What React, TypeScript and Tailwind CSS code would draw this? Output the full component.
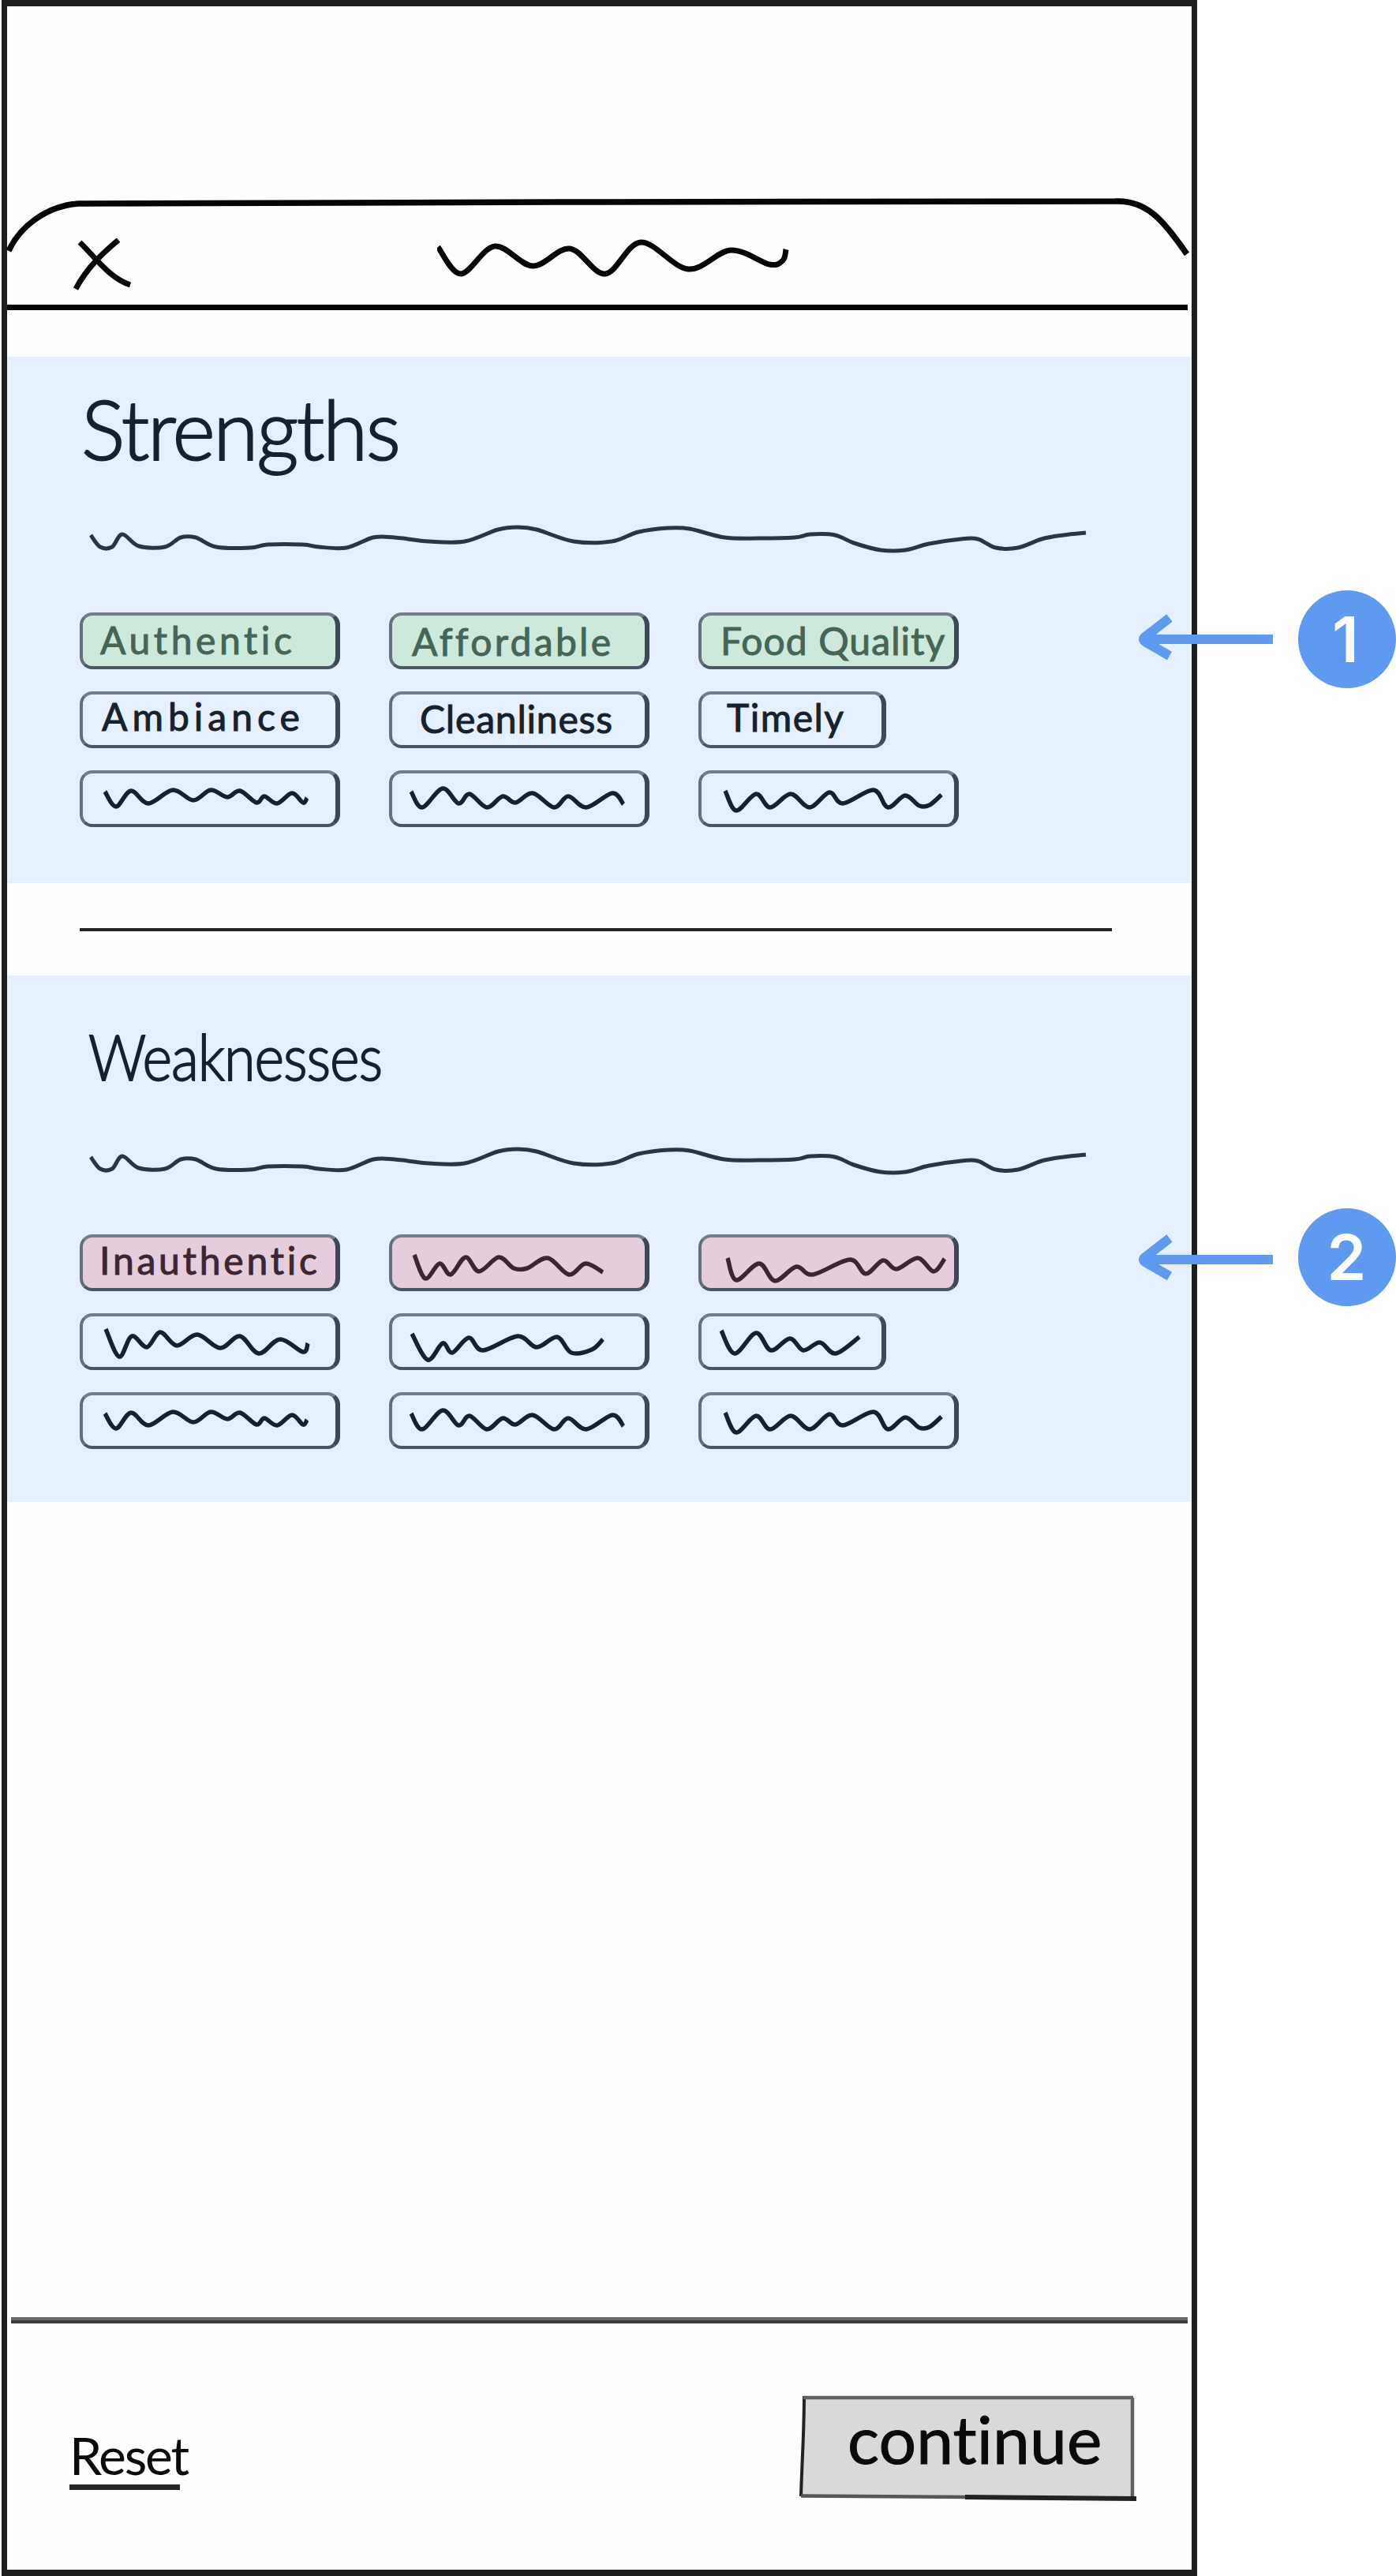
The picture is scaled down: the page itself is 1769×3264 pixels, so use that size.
type Point = [number, number];

/** Smooth curve that passes through every point. */
function curve(points: Point[]): string {
  let d = `M${points[0][0]} ${points[0][1]}`;
  for (let i = 0; i < points.length - 1; i++) {
    const p0 = points[Math.max(0, i - 1)];
    const p1 = points[i];
    const p2 = points[i + 1];
    const p3 = points[Math.min(points.length - 1, i + 2)];
    const c1x = p1[0] + (p2[0] - p0[0]) / 6;
    const c1y = p1[1] + (p2[1] - p0[1]) / 6;
    const c2x = p2[0] - (p3[0] - p1[0]) / 6;
    const c2y = p2[1] - (p3[1] - p1[1]) / 6;
    d += ` C${c1x} ${c1y} ${c2x} ${c2y} ${p2[0]} ${p2[1]}`;
  }
  return d;
}

const TITLE: Point[] = [
  [0, 7], [29, 41], [72, 6], [120, 31], [167, 9], [212, 41], [257, 1], [317, 35], [371, 11], [420, 29], [437, 24], [441, 10],
];

const SUMMARY: Point[] = [
  [14, 18], [26, 33], [41, 33], [54, 17], [75, 32], [108, 33], [128, 21], [147, 21], [173, 33], [216, 34], [238, 30],
  [283, 30], [303, 33], [338, 34], [372, 21], [399, 21], [443, 26], [488, 26], [530, 11], [555, 8], [579, 11], [626, 26],
  [674, 26], [708, 14], [746, 9], [773, 10], [817, 21], [861, 22], [906, 21], [926, 17], [957, 18], [981, 28], [1015, 37],
  [1046, 37], [1076, 29], [1117, 23], [1138, 23], [1161, 34], [1189, 34], [1219, 23], [1247, 18], [1275, 15],
];

const ROW3_A: Point[] = [
  [32, 27], [46, 46], [65, 26], [87, 42], [118, 25], [144, 38], [166, 25], [187, 34], [203, 26], [224, 41], [234, 33],
  [250, 42], [269, 29], [283, 41], [288, 35],
];
const ROW3_B: Point[] = [
  [28, 27], [42, 47], [68, 23], [88, 42], [102, 30], [124, 47], [144, 33], [160, 41], [182, 29], [209, 47], [227, 33],
  [250, 47], [283, 29], [297, 43],
];
const ROW3_C: Point[] = [
  [34, 26], [48, 51], [73, 30], [91, 47], [117, 30], [141, 47], [166, 28], [183, 42], [222, 25], [240, 47], [262, 32],
  [280, 45], [293, 44], [308, 31],
];
const PINK_B: Point[] = [
  [32, 26], [46, 56], [64, 37], [78, 51], [97, 29], [114, 47], [139, 29], [158, 43], [175, 43], [201, 30], [228, 51],
  [249, 37], [271, 48],
];
const PINK_C: Point[] = [
  [37, 30], [48, 58], [77, 37], [97, 59], [124, 41], [145, 51], [192, 32], [212, 50], [234, 33], [251, 44], [278, 30],
  [298, 47], [312, 31],
];
const ROW2_A: Point[] = [
  [33, 20], [50, 55], [66, 29], [85, 43], [102, 24], [123, 41], [149, 27], [178, 44], [203, 29], [227, 51], [254, 33],
  [283, 49], [289, 38],
];
const ROW2_B: Point[] = [
  [29, 26], [49, 59], [68, 38], [80, 50], [101, 31], [119, 47], [163, 29], [187, 43], [213, 30], [231, 50], [257, 46],
  [271, 33],
];
const ROW2_C: Point[] = [
  [29, 22], [46, 51], [73, 25], [92, 47], [116, 32], [133, 47], [154, 37], [174, 51], [204, 30],
];

type Tone = "plain" | "green" | "pink";

interface ChipData {
  label?: string;
  fit?: string;
  scribble?: Point[];
  tone?: Tone;
  short?: boolean;
}

const TONES: Record<Tone, string> = {
  plain: "text-[#17212e]",
  green: "bg-[#cde9dc] text-[#456556]",
  pink: "bg-[#e6cddb] text-[#3d2532]",
};

const STRENGTHS: ChipData[] = [
  { label: "Authentic", fit: "pl-[22px] pt-[7px] tracking-[4.6px]", tone: "green" },
  { label: "Affordable", fit: "pl-[25px] pt-[9px] tracking-[3.3px]", tone: "green" },
  { label: "Food Quality", fit: "pl-[24px] pt-[8px] tracking-[1.1px]", tone: "green" },
  { label: "Ambiance", fit: "pl-[24px] pt-[4px] tracking-[6px]" },
  { label: "Cleanliness", fit: "pl-[35px] pt-[7px] tracking-[0.8px]" },
  { label: "Timely", fit: "pl-[32px] pt-[5px] tracking-[1.5px]", short: true },
  { scribble: ROW3_A },
  { scribble: ROW3_B },
  { scribble: ROW3_C },
];

const WEAKNESSES: ChipData[] = [
  { label: "Inauthentic", fit: "pl-[21px] pt-[5px] tracking-[3.8px]", tone: "pink" },
  { scribble: PINK_B, tone: "pink" },
  { scribble: PINK_C, tone: "pink" },
  { scribble: ROW2_A },
  { scribble: ROW2_B },
  { scribble: ROW2_C, short: true },
  { scribble: ROW3_A },
  { scribble: ROW3_B },
  { scribble: ROW3_C },
];

function Chip({ label, fit = "", scribble, tone = "plain", short }: ChipData) {
  return (
    <button
      type="button"
      className={`flex h-[72px] items-start overflow-hidden rounded-[16px] border-[4.500px] border-r-[6px] border-t-[#747d8b] border-r-[#3c4757] border-b-[#4a5564] border-l-[#636d7b] ${
        short ? "w-[238px]" : "w-[330px]"
      } ${TONES[tone]}`}
    >
      {label && (
        <span className={`text-[48px] leading-none whitespace-nowrap [-webkit-text-stroke:1px_currentColor] ${fit}`}>
          {label}
        </span>
      )}
      {scribble && (
        <svg className="-mt-1 -ml-1 h-[72px] w-[326px] shrink-0" viewBox="0 0 326 72" fill="none">
          <path d={curve(scribble)} stroke="currentColor" strokeWidth="5.500" strokeLinejoin="round" />
        </svg>
      )}
    </button>
  );
}

function Chips({ items }: { items: ChipData[] }) {
  return (
    <div className="mt-[70px] ml-[92px] grid w-max grid-cols-[330px_330px_330px] gap-x-[62px] gap-y-[28px]">
      {items.map((item, i) => (
        <Chip key={i} {...item} />
      ))}
    </div>
  );
}

function Summary({ className }: { className: string }) {
  return (
    <svg className={`ml-[92px] block h-[46px] w-[1290px] ${className}`} viewBox="0 0 1290 46" fill="none">
      <path d={curve(SUMMARY)} stroke="#2a3544" strokeWidth="5" />
    </svg>
  );
}

function Callout({ value, className, drop, nudge }: { value: string; className: string; drop: string; nudge: string }) {
  return (
    <div className={`absolute left-[1440px] flex items-start ${className}`}>
      <svg className={`h-[64px] w-[176px] ${drop}`} viewBox="0 0 176 64" fill="none" stroke="#5e9af2" strokeWidth="12">
        <path d="M9 35 H173" />
        <path d="M42 8 L11 32 Q7 35 11 38 L42 56" strokeLinejoin="round" />
      </svg>
      <div className="ml-[29px] flex size-[124px] items-center justify-center rounded-full bg-[#5e9af2] font-['Inter'] text-[80px] leading-none font-semibold text-white">
        <span className={nudge}>{value}</span>
      </div>
    </div>
  );
}

export default function App() {
  return (
    <div className="relative h-[3264px] w-[1769px] overflow-hidden bg-white font-['Lato',sans-serif]">
      <main className="ml-[2px] flex h-[3264px] w-[1515px] flex-col border-x-[7px] border-y-[8px] border-[#1e1e1e] bg-[#fefefe]">
        <header className="relative h-[444px] shrink-0">
          {/* sheet outline */}
          <svg className="absolute top-[230px] left-0 h-[170px] w-[1501px]" viewBox="0 0 1501 170" fill="none" stroke="#050505">
            <path d="M2 80 C16 49 50 23 90 20 L700 18 L1404 17 C1444 15 1466 42 1495 84" strokeWidth="7.500" />
            <path d="M0 151.500 H1496" strokeWidth="7" />
          </svg>
          <div className="flex items-start pt-[294px] pl-[84px]">
            <svg className="h-[72px] w-[76px]" viewBox="0 0 76 72" fill="none" stroke="#050505" strokeWidth="7">
              <path d="M8 5 C28 24 45 50 72 59" />
              <path d="M57 2 C38 18 18 36 3 64" />
            </svg>
            <svg className="ml-[385px] h-[56px] w-[452px]" viewBox="0 0 452 56" fill="none">
              <path d={curve(TITLE)} stroke="#050505" strokeWidth="7" transform="translate(1 4)" />
            </svg>
          </div>
        </header>

        <section className="mr-[1px] h-[667px] shrink-0 bg-[#e6f0fd] pt-[39px] text-[#17212e]">
          <h1 className="ml-[94px] text-[104px] leading-none font-light tracking-[-2.4px] [-webkit-text-stroke:2px_currentColor]">
            Strengths
          </h1>
          <Summary className="mt-[65px]" />
          <Chips items={STRENGTHS} />
        </section>

        <div className="flex h-[117px] shrink-0 items-center pl-[92px]">
          <hr className="h-[4px] w-[1308px] border-0 bg-[#242424]" />
        </div>

        <section className="mr-[1px] h-[667px] shrink-0 bg-[#e6f0fd] pt-[62px] text-[#17212e]">
          <h2 className="ml-[103px] origin-left scale-x-90 text-[80px] leading-none font-light tracking-[-1.2px] [-webkit-text-stroke:1.8px_currentColor]">
            Weaknesses
          </h2>
          <Summary className="mt-[70px]" />
          <Chips items={WEAKNESSES} />
        </section>

        <footer className="mt-auto h-[320px] shrink-0">
          <div className="mr-[5px] ml-[5px] h-[8px] border-b-[4px] border-[#3b3b3b] bg-[#6a6a6a]" />
          <div className="flex items-start justify-between pr-[69px] pl-[79px]">
            <button type="button" className="mt-[134px] flex flex-col items-start text-[#0a0a0a]">
              <span className="text-[66px] leading-none tracking-[-2.2px]">Reset</span>
              <span className="mt-[4px] h-[7px] w-[140px] bg-[#262626]" />
            </button>
            <button type="button" className="relative mt-[89px] flex h-[136px] w-[428px] items-start text-[#0a0a0a]">
              <svg className="absolute inset-0 h-[136px] w-[428px]" viewBox="0 0 428 136" fill="none">
                <path d="M6 5 H422 V131 H2 Z" fill="#d9d9d9" />
                <path d="M2 130 C3 90 6 50 6 3" stroke="#222222" strokeWidth="4" />
                <path d="M5 5 H423" stroke="#626262" strokeWidth="4.500" />
                <path d="M422 5 V131" stroke="#626262" strokeWidth="4.500" />
                <path d="M2 129.500 L215 131" stroke="#565656" strokeWidth="4.500" />
                <path d="M210 131 L427 133" stroke="#222222" strokeWidth="6" />
              </svg>
              <span className="relative block pt-[15px] pl-[61px] text-left text-[84px] leading-none tracking-[0.1px] [-webkit-text-stroke:1px_currentColor]">
                continue
              </span>
            </button>
          </div>
        </footer>
      </main>

      <Callout value="1" className="top-[748px]" drop="mt-[27px]" nudge="-ml-[4px]" />
      <Callout value="2" className="top-[1531px]" drop="mt-[30px]" nudge="-ml-[1px]" />
    </div>
  );
}
